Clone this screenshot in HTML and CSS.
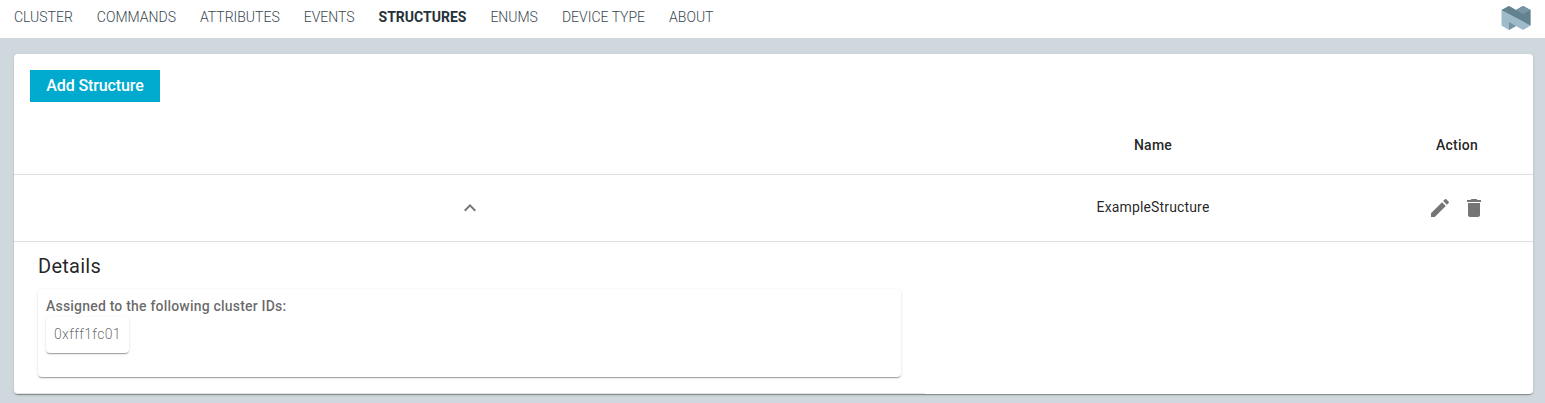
FILE: index.html
```html
<!DOCTYPE html>
<html lang="en">
<head>
<meta charset="utf-8">
<title>Structures</title>
<link rel="stylesheet" href="styles.css">
</head>
<body>
<header class="topbar">
  <nav class="tabs">
    <a class="tab">CLUSTER</a><a class="tab">COMMANDS</a><a class="tab">ATTRIBUTES</a><a class="tab">EVENTS</a><a class="tab active">STRUCTURES</a><a class="tab">ENUMS</a><a class="tab">DEVICE TYPE</a><a class="tab">ABOUT</a>
  </nav>
  <svg class="logo" viewBox="0 0 30 26" aria-label="Logo">
    <path fill="#9dbbc9" d="M.5 5 8 1 15 5 22 1 29.500 5V20.500L22 25 15 21 8 25 .5 20.500z"/>
    <path fill="#64818f" d="M.5 5 8 1 15 5 22 1 29.500 5V20.500z"/>
    <path fill="#7897a5" d="M15 5 22 1 29.500 5 22 9z"/>
    <path fill="#7595a4" d="M8 17 15 21 8 25z"/>
  </svg>
</header>
<main class="card">
  <button class="add">Add Structure</button>
  <div class="row head"><span></span><span>Name</span><span>Action</span></div>
  <div class="row item">
    <span class="cell"><svg class="chevron" viewBox="0 0 24 24"><path d="M12 8l-6 6 1.41 1.41L12 10.83l4.59 4.58L18 14z"/></svg></span>
    <span class="name">ExampleStructure</span>
    <span class="cell actions">
      <svg class="icon" viewBox="0 0 24 24"><path d="M3 17.25V21h3.75L17.81 9.94l-3.75-3.75L3 17.25zM20.71 7.04c.39-.39.39-1.02 0-1.41l-2.34-2.34a.9959.9959 0 0 0-1.41 0l-1.83 1.83 3.75 3.75 1.83-1.83z"/></svg>
      <svg class="icon" viewBox="0 0 24 24"><path d="M6 19c0 1.1.9 2 2 2h8c1.1 0 2-.9 2-2V7H6v12zM19 4h-3.5l-1-1h-5l-1 1H5v2h14V4z"/></svg>
    </span>
  </div>
  <section class="details">
    <h2 class="title">Details</h2>
    <div class="panel">
      <div class="label">Assigned to the following cluster IDs:</div>
      <div class="chip">0xfff1fc01</div>
    </div>
  </section>
</main>
</body>
</html>
```
FILE: styles.css
```css
* { box-sizing: border-box; }
body { margin: 0; height: 403px; overflow: hidden; background: #cfd8dd; font-family: Roboto, "Liberation Sans", sans-serif; color: rgba(0,0,0,.87); }
.topbar { height: 38px; background: #fff; display: flex; justify-content: space-between; padding: 0 14px; }
.tabs { display: flex; gap: 24px; }
.tab { font-size: 14px; line-height: 34px; font-weight: 300; color: #37474f; white-space: nowrap; }
.tab.active { font-weight: 700; color: #263238; }
.logo { width: 30px; height: 26px; margin-top: 5px; }
.card { margin: 16px 12px 0 14px; height: 340px; padding-top: 16px; background: #fff; border-radius: 4px; box-shadow: 0 2px 1px -1px rgba(0,0,0,.2), 0 1px 1px rgba(0,0,0,.14), 0 1px 3px rgba(0,0,0,.12); }
.add { display: block; margin-left: 16px; width: 130px; height: 32px; padding: 0; border: 0; background: #00a9ce; color: #fff; font: 500 16px/32px Roboto, sans-serif; letter-spacing: -.12px; }
.row { display: grid; grid-template-columns: 911px 456px 1fr; text-align: center; border-bottom: 1px solid #e0e0e0; font-size: 14px; letter-spacing: .15px; }
.head { height: 73px; padding-top: 14px; line-height: 58px; font-weight: 500; letter-spacing: .24px; }
.item { height: 67px; line-height: 64px; }
.cell { display: flex; align-items: center; justify-content: center; }
.actions { gap: 10px; }
.chevron { width: 24px; height: 24px; fill: #757575; }
.icon { width: 24px; height: 24px; fill: #757575; }
.details { width: 911px; height: 152px; padding: 8px 24px 0; border-bottom: 1px solid #e0e0e0; border-bottom-left-radius: 4px; }
.title { margin: 0 0 7px; font-size: 20px; line-height: 32px; font-weight: 400; letter-spacing: .25px; }
.panel { height: 88px; padding: 8px; border-radius: 4px; color: rgba(0,0,0,.6); font-size: 14px; box-shadow: 0 2px 1px -1px rgba(0,0,0,.2), 0 1px 1px rgba(0,0,0,.14), 0 1px 3px rgba(0,0,0,.12); }
.label { height: 20px; line-height: 18px; font-weight: 500; letter-spacing: .2px; }
.chip { width: 83px; height: 36px; padding: 0 8px; line-height: 34px; font-weight: 300; letter-spacing: .34px; border-radius: 4px; box-shadow: 0 2px 1px -1px rgba(0,0,0,.2), 0 1px 1px rgba(0,0,0,.14), 0 1px 3px rgba(0,0,0,.12); }
```
